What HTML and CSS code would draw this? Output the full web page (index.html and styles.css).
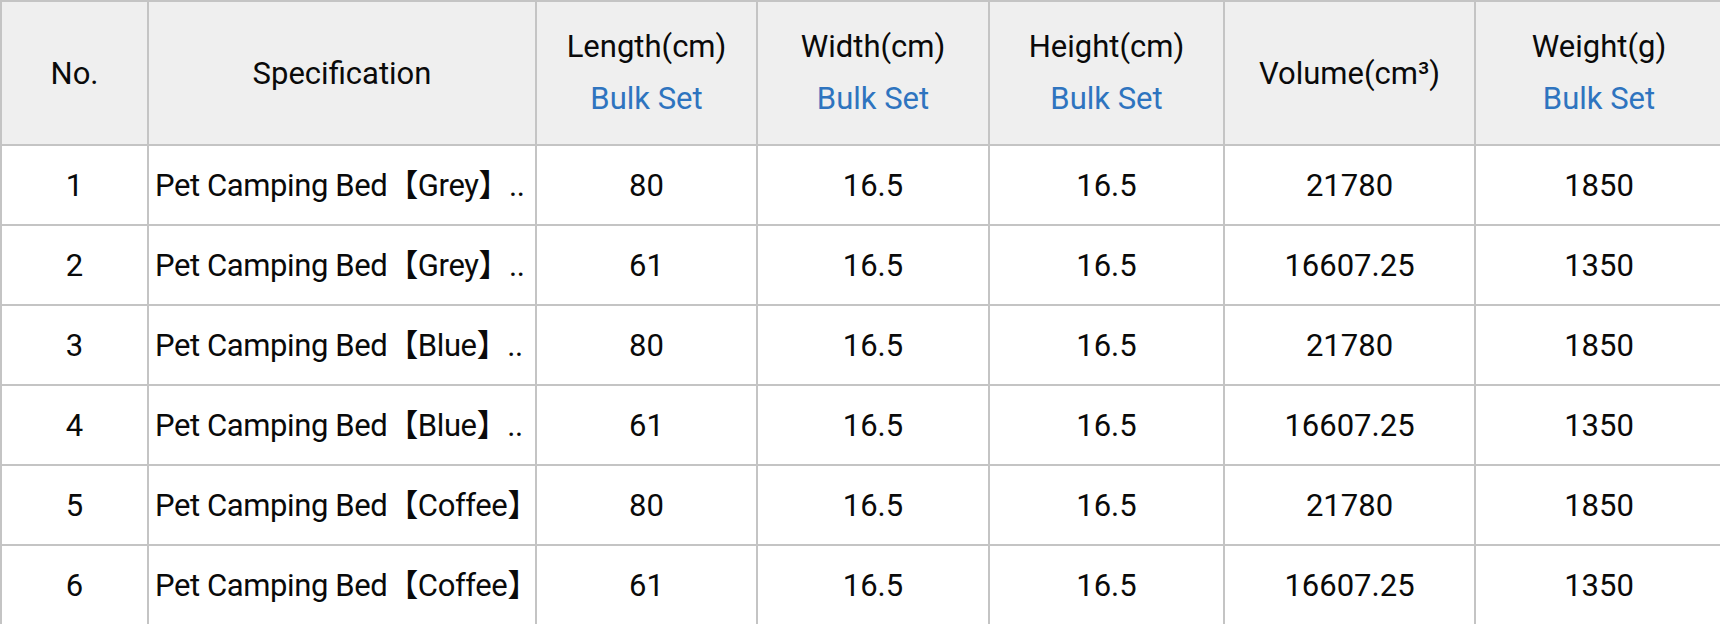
FILE: index.html
```html
<!DOCTYPE html>
<html>
<head>
<meta charset="utf-8">
<link rel="stylesheet" href="styles.css">
</head>
<body>
<table class="spec-table">
  <colgroup>
    <col class="c-no">
    <col class="c-spec">
    <col class="c-len">
    <col class="c-wid">
    <col class="c-hei">
    <col class="c-vol">
    <col class="c-wei">
  </colgroup>
  <thead>
    <tr class="head-row">
      <th>No.</th>
      <th>Specification</th>
      <th><div class="th-title">Length(cm)</div><div class="bulk">Bulk Set</div></th>
      <th><div class="th-title">Width(cm)</div><div class="bulk">Bulk Set</div></th>
      <th><div class="th-title">Height(cm)</div><div class="bulk">Bulk Set</div></th>
      <th>Volume(cm³)</th>
      <th><div class="th-title">Weight(g)</div><div class="bulk">Bulk Set</div></th>
    </tr>
  </thead>
  <tbody>
    <tr><td>1</td><td class="spec">Pet Camping Bed【Grey】..</td><td>80</td><td>16.5</td><td>16.5</td><td>21780</td><td>1850</td></tr>
    <tr><td>2</td><td class="spec">Pet Camping Bed【Grey】..</td><td>61</td><td>16.5</td><td>16.5</td><td>16607.25</td><td>1350</td></tr>
    <tr><td>3</td><td class="spec">Pet Camping Bed【Blue】..</td><td>80</td><td>16.5</td><td>16.5</td><td>21780</td><td>1850</td></tr>
    <tr><td>4</td><td class="spec">Pet Camping Bed【Blue】..</td><td>61</td><td>16.5</td><td>16.5</td><td>16607.25</td><td>1350</td></tr>
    <tr><td>5</td><td class="spec">Pet Camping Bed【Coffee】</td><td>80</td><td>16.5</td><td>16.5</td><td>21780</td><td>1850</td></tr>
    <tr><td>6</td><td class="spec">Pet Camping Bed【Coffee】</td><td>61</td><td>16.5</td><td>16.5</td><td>16607.25</td><td>1350</td></tr>
  </tbody>
</table>
</body>
</html>
```
FILE: styles.css
```css
html, body {
  margin: 0;
  padding: 0;
  background: #ffffff;
  overflow: hidden;
}
body {
  font-family: Roboto, "Noto Sans CJK SC", sans-serif;
  color: #0a0a0a;
}
.spec-table {
  width: 1720px;
  table-layout: fixed;
  border-collapse: separate;
  border-spacing: 0;
  border-top: 2px solid #c4c4c4;
  border-left: 2px solid #c4c4c4;
}
.c-no { width: 147px; }
.c-spec { width: 388px; }
.c-len { width: 221px; }
.c-wid { width: 232px; }
.c-hei { width: 235px; }
.c-vol { width: 251px; }
.c-wei { width: 246px; }

.spec-table th,
.spec-table td {
  border-right: 2px solid #c4c4c4;
  border-bottom: 2px solid #c4c4c4;
  padding: 0;
  text-align: center;
  vertical-align: middle;
  font-size: 31px;
  font-weight: 400;
  white-space: nowrap;
  overflow: hidden;
}
.spec-table th:last-child,
.spec-table td:last-child {
  border-right: none;
}
.spec-table th {
  background: #efefef;
  height: 142px;
}
.spec-table td {
  height: 78px;
}
.spec-table td.spec {
  text-align: left;
  padding: 0 0 0 6px;
  line-height: 1;
  letter-spacing: -0.4px;
}
.th-title {
  line-height: 36px;
}
.bulk {
  color: #2e74bf;
  line-height: 36px;
  margin-top: 16px;
}
```
